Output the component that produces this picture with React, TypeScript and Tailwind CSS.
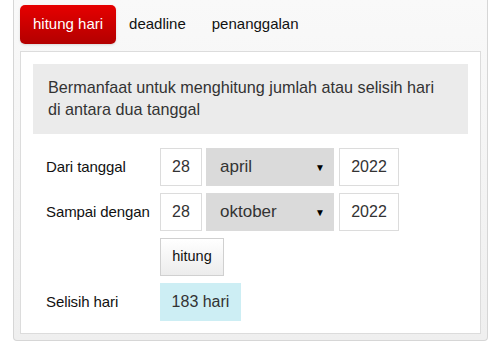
import React from 'react';

const font = { fontFamily: '"Liberation Sans", Arial, sans-serif' };

function DateRow({ label, day, month, year }: { label: string; day: string; month: string; year: string }) {
  return (
    <div className="flex items-center h-[38px]">
      <div className="w-[127px] pl-[13px] text-[15px] text-[#111] tracking-[-0.1px]">{label}</div>
      <div className="w-[42px] h-[38px] border border-[#dcdcdc] bg-white flex items-center justify-center text-[16px] text-[#333]">
        {day}
      </div>
      <div className="ml-[4px] w-[128px] h-[38px] bg-[#dadada] flex items-center justify-between pl-[14px] pr-[9px] text-[17px] text-[#333]">
        <span>{month}</span>
        <span className="text-[10px] text-black">▼</span>
      </div>
      <div className="ml-[5px] w-[60px] h-[38px] border border-[#dcdcdc] bg-white flex items-center justify-center text-[16px] text-[#333]">
        {year}
      </div>
    </div>
  );
}

export default function App() {
  return (
    <div className="w-[500px] h-[361px] bg-white" style={font}>
      <div className="ml-[13px] w-[475px] h-[341px] border-x border-b border-[#d6d6d6] rounded-b-[4px] bg-gradient-to-b from-[#f9f9f9] to-[#efefef] px-[6px] pt-[5px]">
        <div className="flex h-[39px] text-[15px]">
          <div className="px-[13px] flex items-center rounded-[5px] bg-gradient-to-b from-[#e60000] to-[#b30000] text-white shadow-sm">
            hitung hari
          </div>
          <div className="px-[13px] flex items-center text-[#111]">deadline</div>
          <div className="px-[13px] flex items-center text-[#111]">penanggalan</div>
        </div>
        <div className="mt-[7px] w-[461px] h-[283px] border border-[#dcdcdc] bg-white p-[12px]">
          <div className="h-[70px] bg-[#ebebeb] pl-[15px] pr-[24px] pt-[12px] text-[16.2px] leading-[22px] text-[#333]">
            Bermanfaat untuk menghitung jumlah atau selisih hari di antara dua tanggal
          </div>
          <div className="mt-[14px] flex flex-col gap-[7px]">
            <DateRow label="Dari tanggal" day="28" month="april" year="2022" />
            <DateRow label="Sampai dengan" day="28" month="oktober" year="2022" />
            <div className="flex items-center h-[38px]">
              <div className="w-[127px]" />
              <div className="w-[64px] h-[38px] border border-[#d0d0d0] bg-gradient-to-b from-white to-[#ececec] flex items-center justify-center text-[14.5px] text-[#111]">
                hitung
              </div>
            </div>
            <div className="flex items-center h-[38px]">
              <div className="w-[127px] pl-[13px] text-[15px] text-[#111] tracking-[-0.1px]">Selisih hari</div>
              <div className="w-[81px] h-[38px] bg-[#cdeef4] flex items-center justify-center text-[16px] text-[#333]">
                183 hari
              </div>
            </div>
          </div>
        </div>
      </div>
    </div>
  );
}
